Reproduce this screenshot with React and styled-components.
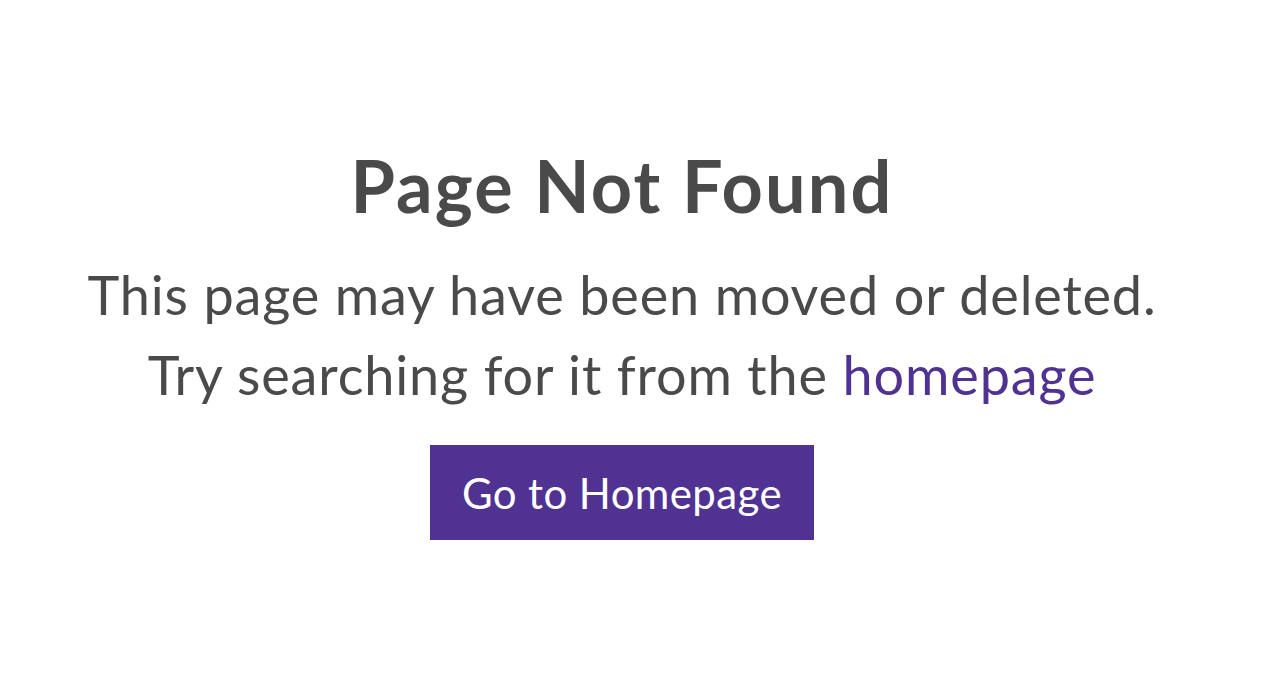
import React from "react";
import styled, { createGlobalStyle } from "styled-components";

const Global = createGlobalStyle`
  html, body { margin: 0; padding: 0; background: #ffffff; }
  body { font-family: Lato, "Noto Sans", sans-serif; }
`;

const Page = styled.main`
  display: flex;
  flex-direction: column;
  align-items: center;
  padding: 140px 23px 0 0;
  color: #4a4a4a;
  text-align: center;
`;

const Title = styled.h1`
  margin: 0;
  font-size: 72px;
  font-weight: 700;
  line-height: 90px;
  letter-spacing: 2.1px;
`;

const Message = styled.p`
  margin: 25px 0 0;
  font-size: 54px;
  font-weight: 400;
  line-height: 80px;
  letter-spacing: 0.85px;
`;

const Link = styled.a`
  color: #4f3291;
  text-decoration: none;
`;

const Button = styled.a`
  display: flex;
  align-items: center;
  justify-content: center;
  margin-top: 30px;
  width: 384px;
  height: 95px;
  background: #4f3291;
  color: #ffffff;
  font-size: 42px;
  letter-spacing: 0.4px;
  text-decoration: none;
`;

export default function App() {
  return (
    <>
      <Global />
      <Page>
        <Title>Page Not Found</Title>
        <Message>
          This page may have been moved or deleted.
          <br />
          Try searching for it from the <Link href="#">homepage</Link>
        </Message>
        <Button href="#">Go to Homepage</Button>
      </Page>
    </>
  );
}
